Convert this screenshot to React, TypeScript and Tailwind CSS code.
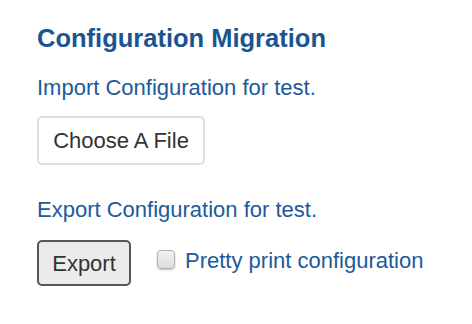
import React from "react";

export default function App() {
  return (
    <div
      className="w-[472px] h-[324px] bg-white pl-[37px] pt-[24px]"
      style={{ fontFamily: '"Liberation Sans", Arial, Helvetica, sans-serif' }}
    >
      <h1 className="text-[25.5px] leading-[28px] font-bold text-[#1c5490]">
        Configuration Migration
      </h1>
      <p className="mt-[23px] text-[22px] leading-[26px] text-[#205a9a]">
        Import Configuration for test.
      </p>
      <button className="mt-[15px] w-[168px] h-[49px] flex items-center justify-center rounded-[5px] border-2 border-[#dedede] bg-white text-[22px] text-[#333333]">
        Choose A File
      </button>
      <p className="mt-[32px] text-[22px] leading-[26px] text-[#205a9a]">
        Export Configuration for test.
      </p>
      <div className="mt-[17px] flex items-start">
        <button className="w-[94px] h-[46px] flex items-center justify-center rounded-[5px] border-2 border-[#565656] bg-[#ebebeb] text-[22px] text-[#333333]">
          Export
        </button>
        <label className="ml-[26px] flex items-start">
          <span className="mt-[10px] w-[18px] h-[19px] rounded-[4px] border border-[#b0b0b0] bg-gradient-to-b from-[#f2f2f2] to-[#dcdcdc] shadow-[0_1px_2px_rgba(0,0,0,0.25)]" />
          <span className="ml-[10px] mt-[8px] text-[22px] leading-[26px] text-[#205a9a]">
            Pretty print configuration
          </span>
        </label>
      </div>
    </div>
  );
}
